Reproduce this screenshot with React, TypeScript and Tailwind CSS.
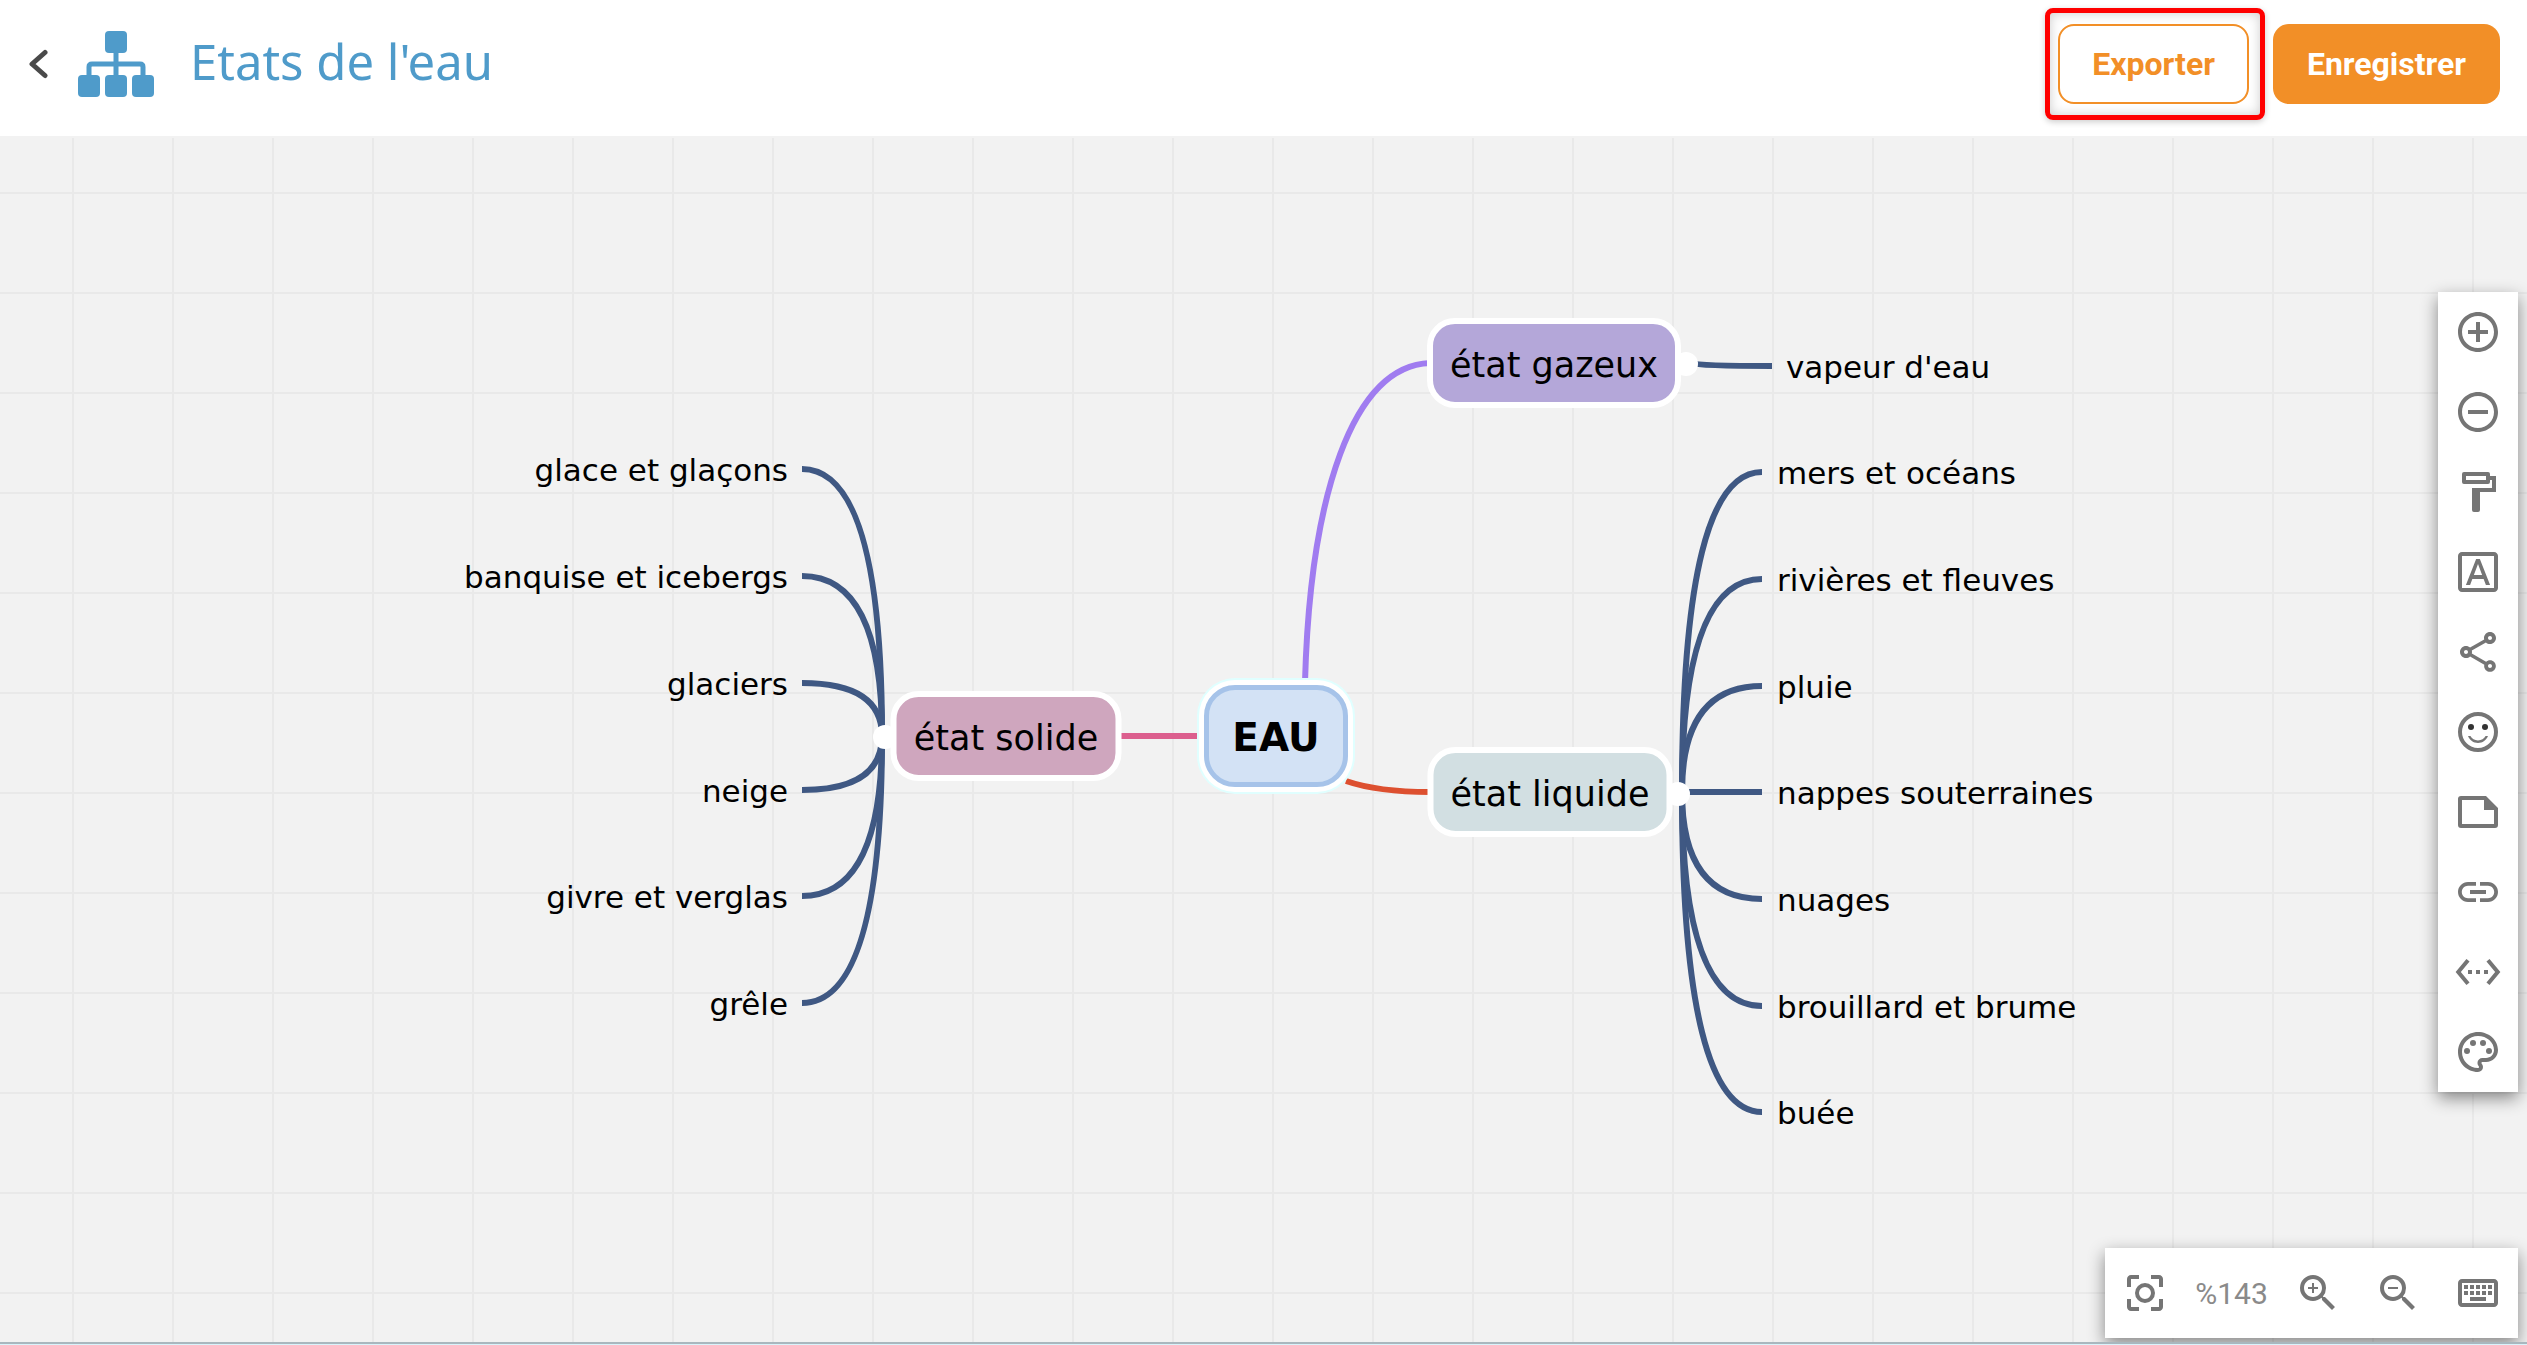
import type { ReactNode } from 'react';
import {
  MdLink,
  MdOutlineAddCircleOutline,
  MdOutlineFontDownload,
  MdOutlineKeyboard,
  MdOutlinePalette,
  MdOutlineShare,
  MdRemoveCircleOutline,
  MdSettingsEthernet,
  MdZoomIn,
  MdZoomOut,
} from 'react-icons/md';

type Point = { x: number; y: number };
type Leaf = Point & { label: string };
type Branch = Leaf & { fill: string; width: string };

const LEFT_LEAVES: Leaf[] = [
  { label: 'glace et glaçons', x: 788, y: 331 },
  { label: 'banquise et icebergs', x: 788, y: 438 },
  { label: 'glaciers', x: 788, y: 545 },
  { label: 'neige', x: 788, y: 652 },
  { label: 'givre et verglas', x: 788, y: 758 },
  { label: 'grêle', x: 788, y: 865 },
];

const RIGHT_LEAVES: Leaf[] = [
  { label: 'mers et océans', x: 1777, y: 334 },
  { label: 'rivières et fleuves', x: 1777, y: 441 },
  { label: 'pluie', x: 1777, y: 548 },
  { label: 'nappes souterraines', x: 1777, y: 654 },
  { label: 'nuages', x: 1777, y: 761 },
  { label: 'brouillard et brume', x: 1777, y: 868 },
  { label: 'buée', x: 1777, y: 974 },
];

const VAPOR: Leaf = { label: "vapeur d'eau", x: 1786, y: 228 };

const BRANCHES: Branch[] = [
  { label: 'état gazeux', x: 1554, y: 225, fill: 'bg-[#b4a7d9]', width: 'w-[254px]' },
  { label: 'état liquide', x: 1550, y: 654, fill: 'bg-[#d2dfe2]', width: 'w-[245px]' },
  { label: 'état solide', x: 1006, y: 598, fill: 'bg-[#cfa6be]', width: 'w-[231px]' },
];

const HANDLES: Point[] = [
  { x: 1686, y: 226 },
  { x: 1678, y: 656 },
  { x: 885, y: 599 },
];

function Glyph({ children }: { children: ReactNode }) {
  return (
    <svg viewBox="0 0 24 24" className="size-12" fill="currentColor" aria-hidden="true">
      {children}
    </svg>
  );
}

const rollerIcon = (
  <Glyph>
    <path
      fillRule="evenodd"
      d="M5 2h12a1 1 0 0 1 1 1v1h3v8h-8v9a1 1 0 0 1-1 1h-2a1 1 0 0 1-1-1V10h10V6h-1v1a1 1 0 0 1-1 1H5a1 1 0 0 1-1-1V3a1 1 0 0 1 1-1zm1 2v2h10V4z"
    />
  </Glyph>
);

const smileIcon = (
  <Glyph>
    <circle cx="12" cy="12" r="9" fill="none" stroke="currentColor" strokeWidth="2" />
    <circle cx="8.5" cy="9.5" r="1.5" fill="#333" />
    <circle cx="15.5" cy="9.5" r="1.5" fill="#333" />
    <path d="M7 14h1.2c.7 1.4 2.1 2.2 3.8 2.2s3.1-.8 3.8-2.2H17c-.8 2.1-2.7 3.5-5 3.5S7.8 16.1 7 14z" />
  </Glyph>
);

const noteIcon = (
  <Glyph>
    <path
      fillRule="evenodd"
      d="M3.5 4H16l6 6v8.5a1.5 1.5 0 0 1-1.5 1.5h-17A1.5 1.5 0 0 1 2 18.5v-13A1.5 1.5 0 0 1 3.5 4zM4 6v12h16v-7h-5V6z"
    />
  </Glyph>
);

const focusIcon = (
  <Glyph>
    <circle cx="12" cy="12" r="4" fill="none" stroke="currentColor" strokeWidth="2" />
    <path d="M5 15H3v4c0 1.1.9 2 2 2h4v-2H5v-4zM5 5h4V3H5c-1.1 0-2 .9-2 2v4h2V5zm14-2h-4v2h4v4h2V5c0-1.1-.9-2-2-2zm0 16h-4v2h4c1.1 0 2-.9 2-2v-4h-2v4z" />
  </Glyph>
);

const TOOLS: { label: string; icon: ReactNode }[] = [
  { label: 'Ajouter', icon: <MdOutlineAddCircleOutline className="size-12" /> },
  { label: 'Supprimer', icon: <MdRemoveCircleOutline className="size-12" /> },
  { label: 'Couleur de fond', icon: rollerIcon },
  { label: 'Texte', icon: <MdOutlineFontDownload className="size-12" /> },
  { label: 'Forme', icon: <MdOutlineShare className="size-12" /> },
  { label: 'Icône', icon: smileIcon },
  { label: 'Note', icon: noteIcon },
  { label: 'Lien', icon: <MdLink className="size-12" /> },
  { label: 'Relation', icon: <MdSettingsEthernet className="size-12" /> },
  { label: 'Thème', icon: <MdOutlinePalette className="size-12" /> },
];

function ToolButton({ label, children }: { label: string; children: ReactNode }) {
  return (
    <button type="button" aria-label={label} className="flex size-20 items-center justify-center text-[#757575]">
      {children}
    </button>
  );
}

function Header() {
  return (
    <header className="flex h-[136px] shrink-0 items-center bg-white pr-[27px] pb-2 pl-7">
      <button type="button" aria-label="Retour" className="mr-[30px]">
        <svg viewBox="0 0 20 30" className="h-[30px] w-5" fill="none" stroke="#4a4a4a" strokeWidth="5" strokeLinecap="round" strokeLinejoin="round">
          <path d="M17 3.5 4 15 17 26.5" />
        </svg>
      </button>
      <svg viewBox="0 0 76 66" className="mr-9 h-[66px] w-[76px]" fill="#4f9bca" aria-hidden="true">
        <rect x="27" y="0" width="22" height="22" rx="4" />
        <rect x="0" y="44" width="22" height="22" rx="4" />
        <rect x="27" y="44" width="22" height="22" rx="4" />
        <rect x="54" y="44" width="22" height="22" rx="4" />
        <path d="M38 20v26M11 46V36q0-3 3-3h48q3 0 3 3v10" fill="none" stroke="#4f9bca" strokeWidth="5" />
      </svg>
      <h1 className="pb-1 font-['Noto_Sans'] text-[49px] text-[#4f9bca]">Etats de l'eau</h1>
      <div className="ml-auto flex items-center gap-2 font-['Roboto'] text-[32px] font-bold">
        <div className="rounded-lg border-[5px] border-[#ff0000] py-[11px] pr-[11px] pl-2 shadow-[0_2px_6px_rgba(0,0,0,0.2),inset_0_0_12px_rgba(0,0,0,0.2)]">
          <button type="button" className="h-20 rounded-2xl border-2 border-[#f28f27] bg-white px-8 text-[#f28f27]">
            Exporter
          </button>
        </div>
        <button type="button" className="h-20 rounded-2xl bg-[#f28f27] px-[34px] text-white">
          Enregistrer
        </button>
      </div>
    </header>
  );
}

function Links() {
  return (
    <svg className="absolute inset-0 size-full" fill="none" strokeWidth="6" aria-hidden="true">
      <g stroke="#3f5883">
        {LEFT_LEAVES.map((leaf) => (
          <path key={leaf.label} d={`M882 598Q882 ${leaf.y} 802 ${leaf.y}`} />
        ))}
        {RIGHT_LEAVES.map((leaf) => (
          <path key={leaf.label} d={`M1682 654Q1682 ${leaf.y} 1762 ${leaf.y}`} />
        ))}
        <path d="M1690 225Q1700 228 1772 228" />
      </g>
      <path stroke="#a07cf0" d="M1305 544C1310 359 1352 228 1430 225" />
      <path stroke="#dd5030" d="M1346 643Q1378 654 1430 654" />
      <path stroke="#dc5f8e" d="M1118 598H1200" />
    </svg>
  );
}

function MindMap() {
  return (
    <div className="absolute inset-0 font-['DejaVu_Sans'] text-[31px] whitespace-nowrap text-black">
      <Links />
      {LEFT_LEAVES.map((leaf) => (
        <div key={leaf.label} className="absolute -translate-x-full -translate-y-1/2 pt-0.5" style={{ left: leaf.x, top: leaf.y }}>
          {leaf.label}
        </div>
      ))}
      {[VAPOR, ...RIGHT_LEAVES].map((leaf) => (
        <div key={leaf.label} className="absolute -translate-y-1/2 pt-0.5" style={{ left: leaf.x, top: leaf.y }}>
          {leaf.label}
        </div>
      ))}
      {HANDLES.map((handle) => (
        <span
          key={handle.x}
          className="absolute size-6 -translate-x-1/2 -translate-y-1/2 rounded-full bg-white"
          style={{ left: handle.x, top: handle.y }}
        />
      ))}
      {BRANCHES.map((node) => (
        <div
          key={node.label}
          className={`absolute flex h-[90px] -translate-x-1/2 -translate-y-1/2 items-center justify-center rounded-[28px] border-6 border-white pt-1 text-[35px] ${node.fill} ${node.width}`}
          style={{ left: node.x, top: node.y }}
        >
          {node.label}
        </div>
      ))}
      <div
        className="absolute flex h-[102px] w-36 -translate-x-1/2 -translate-y-1/2 items-center justify-center rounded-[31px] border-[5px] border-[#a6c3e9] bg-[#d3e2f5] pt-1 text-[39px] font-bold shadow-[0_0_0_5px_white,0_0_0_7px_#e0ffff]"
        style={{ left: 1276, top: 598 }}
      >
        EAU
      </div>
    </div>
  );
}

export default function App() {
  return (
    <div className="flex min-h-screen flex-col">
      <Header />
      <main className="relative flex-1 overflow-hidden border-t-2 border-[#f2f2f2] bg-[#f2f2f2] bg-[linear-gradient(#e9e9e9_2px,transparent_2px),linear-gradient(90deg,#e9e9e9_2px,transparent_2px)] bg-size-[100px_100px] bg-position-[72px_54px]">
        <MindMap />
        <nav aria-label="Outils" className="absolute top-[154px] right-[9px] flex flex-col bg-white shadow-[0_6px_16px_rgba(0,0,0,0.45)]">
          {TOOLS.map((tool) => (
            <ToolButton key={tool.label} label={tool.label}>
              {tool.icon}
            </ToolButton>
          ))}
        </nav>
        <div className="absolute right-[9px] bottom-1 flex h-[90px] items-center bg-white shadow-[0_6px_16px_rgba(0,0,0,0.45)]">
          <ToolButton label="Recentrer">{focusIcon}</ToolButton>
          <span className="w-[93px] text-center font-['Roboto'] text-[30px] text-[#8a8a8a]">%143</span>
          <ToolButton label="Zoom avant">
            <MdZoomIn className="size-12" />
          </ToolButton>
          <ToolButton label="Zoom arrière">
            <MdZoomOut className="size-12" />
          </ToolButton>
          <ToolButton label="Raccourcis clavier">
            <MdOutlineKeyboard className="size-12" />
          </ToolButton>
        </div>
      </main>
      <div className="h-[3px] border-t-2 border-[#a9b7be] bg-[#d9f3fb]" />
    </div>
  );
}
